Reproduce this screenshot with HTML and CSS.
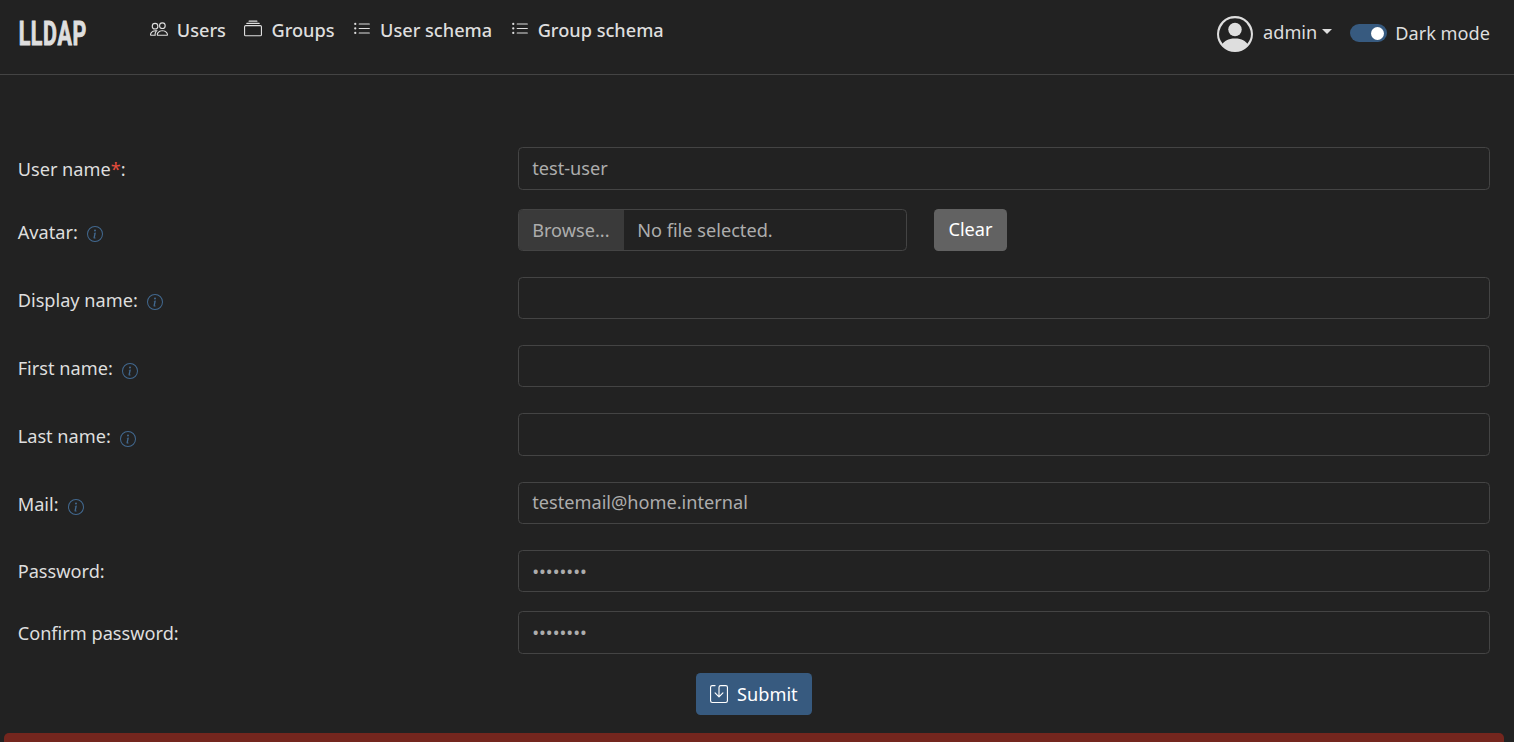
FILE: index.html
```html
<!DOCTYPE html>
<html lang="en">
<head>
<meta charset="utf-8">
<title>LLDAP</title>
<link rel="stylesheet" href="styles.css">
</head>
<body>
<svg class="defs" aria-hidden="true">
  <symbol id="people" viewBox="0 0 16 16"><path d="M15 14s1 0 1-1-1-4-5-4-5 3-5 4 1 1 1 1h8Zm-7.978-1A.261.261 0 0 1 7 12.996c.001-.264.167-1.03.76-1.72C8.312 10.629 9.282 10 11 10c1.717 0 2.687.63 3.24 1.276.593.69.758 1.457.76 1.72l-.008.002a.274.274 0 0 1-.014.002H7.022ZM11 7a2 2 0 1 0 0-4 2 2 0 0 0 0 4Zm3-2a3 3 0 1 1-6 0 3 3 0 0 1 6 0ZM6.936 9.28a5.88 5.88 0 0 0-1.23-.247A7.35 7.35 0 0 0 5 9c-4 0-5 3-5 4 0 .667.333 1 1 1h4.216A2.238 2.238 0 0 1 5 13c0-1.01.377-2.042 1.09-2.904.243-.294.526-.569.846-.816ZM4.92 10A5.493 5.493 0 0 0 4 13H1c0-.26.164-1.03.76-1.724.545-.636 1.492-1.256 3.16-1.275ZM1.5 5.5a3 3 0 1 1 6 0 3 3 0 0 1-6 0Zm3-2a2 2 0 1 0 0 4 2 2 0 0 0 0-4Z"/></symbol>
  <symbol id="collection" viewBox="0 0 16 16"><path d="M2.5 3.5a.5.5 0 0 1 0-1h11a.5.5 0 0 1 0 1h-11zm2-2a.5.5 0 0 1 0-1h7a.5.5 0 0 1 0 1h-7zM0 13a1.5 1.5 0 0 0 1.5 1.5h13A1.5 1.5 0 0 0 16 13V6a1.5 1.5 0 0 0-1.5-1.5h-13A1.5 1.5 0 0 0 0 6v7zm1.5.5A.5.5 0 0 1 1 13V6a.5.5 0 0 1 .5-.5h13a.5.5 0 0 1 .5.5v7a.5.5 0 0 1-.5.5h-13z"/></symbol>
  <symbol id="list" viewBox="0 0 16 16"><path d="M5 11.5a.5.5 0 0 1 .5-.5h9a.5.5 0 0 1 0 1h-9a.5.5 0 0 1-.5-.5zm0-4a.5.5 0 0 1 .5-.5h9a.5.5 0 0 1 0 1h-9a.5.5 0 0 1-.5-.5zm0-4a.5.5 0 0 1 .5-.5h9a.5.5 0 0 1 0 1h-9a.5.5 0 0 1-.5-.5zm-3 1a1 1 0 1 0 0-2 1 1 0 0 0 0 2zm0 4a1 1 0 1 0 0-2 1 1 0 0 0 0 2zm0 4a1 1 0 1 0 0-2 1 1 0 0 0 0 2z"/></symbol>
  <symbol id="person" viewBox="0 0 16 16"><path d="M11 6a3 3 0 1 1-6 0 3 3 0 0 1 6 0z"/><path fill-rule="evenodd" d="M0 8a8 8 0 1 1 16 0A8 8 0 0 1 0 8zm8-7a7 7 0 0 0-5.468 11.37C3.242 11.226 4.805 10 8 10s4.757 1.225 5.468 2.37A7 7 0 0 0 8 1z"/></symbol>
  <symbol id="info" viewBox="0 0 16 16"><path d="M8 15A7 7 0 1 1 8 1a7 7 0 0 1 0 14zm0 1A8 8 0 1 0 8 0a8 8 0 0 0 0 16z"/><path d="m8.930 6.588-2.290.287-.082.380.450.083c.294.070.352.176.288.469l-.738 3.468c-.194.897.105 1.319.808 1.319.545 0 1.178-.252 1.465-.598l.088-.416c-.200.176-.492.246-.686.246-.275 0-.375-.193-.304-.533L8.930 6.588zM9 4.500a1 1 0 1 1-2 0 1 1 0 0 1 2 0z"/></symbol>
  <symbol id="save" viewBox="0 0 16 16"><path d="M2 1a1 1 0 0 0-1 1v12a1 1 0 0 0 1 1h12a1 1 0 0 0 1-1V2a1 1 0 0 0-1-1H9.5a1 1 0 0 0-1 1v7.293l2.646-2.647a.5.5 0 0 1 .708.708l-3.5 3.5a.5.5 0 0 1-.708 0l-3.5-3.5a.5.5 0 1 1 .708-.708L7.5 9.293V2a2 2 0 0 1 2-2H14a2 2 0 0 1 2 2v12a2 2 0 0 1-2 2H2a2 2 0 0 1-2-2V2a2 2 0 0 1 2-2h2.5a.5.5 0 0 1 0 1H2z"/></symbol>
</svg>
<header class="header">
  <a class="brand"><span class="brand-text">LLDAP</span></a>
  <nav class="nav">
    <a class="nav-link"><svg class="icon"><use href="#people"/></svg>Users</a>
    <a class="nav-link"><svg class="icon"><use href="#collection"/></svg>Groups</a>
    <a class="nav-link"><svg class="icon"><use href="#list"/></svg>User schema</a>
    <a class="nav-link"><svg class="icon"><use href="#list"/></svg>Group schema</a>
  </nav>
  <div class="account">
    <svg class="avatar"><use href="#person"/></svg>
    <span class="account-name">admin</span>
    <span class="caret"></span>
    <span class="switch"><span class="knob"></span></span>
    <span class="mode">Dark mode</span>
  </div>
</header>
<form class="form">
  <div class="row">
    <label class="label">User name<span class="required">*</span>:</label>
    <input class="control" type="text" value="test-user">
  </div>
  <div class="row row-wide">
    <label class="label label-info">Avatar:<svg class="info"><use href="#info"/></svg></label>
    <div class="file-group">
      <div class="file"><span class="browse">Browse...</span><span class="file-name">No file selected.</span></div>
      <button class="btn btn-clear" type="button">Clear</button>
    </div>
  </div>
  <div class="row row-wide">
    <label class="label label-info">Display name:<svg class="info"><use href="#info"/></svg></label>
    <input class="control" type="text">
  </div>
  <div class="row row-wide">
    <label class="label label-info">First name:<svg class="info"><use href="#info"/></svg></label>
    <input class="control" type="text">
  </div>
  <div class="row row-wide">
    <label class="label label-info">Last name:<svg class="info"><use href="#info"/></svg></label>
    <input class="control" type="text">
  </div>
  <div class="row row-wide">
    <label class="label label-info">Mail:<svg class="info"><use href="#info"/></svg></label>
    <input class="control" type="text" value="testemail@home.internal">
  </div>
  <div class="row">
    <label class="label">Password:</label>
    <input class="control control-password" type="password" value="password">
  </div>
  <div class="row">
    <label class="label">Confirm password:</label>
    <input class="control control-password" type="password" value="password">
  </div>
  <div class="actions">
    <button class="btn btn-submit" type="button"><svg class="save"><use href="#save"/></svg>Submit</button>
  </div>
</form>
<div class="alert"></div>
</body>
</html>
```
FILE: styles.css
```css
* { box-sizing: border-box; }
body {
  margin: 0;
  background: #222;
  color: #dedede;
  font: 18.17px/27px "Noto Sans", sans-serif;
}
svg { fill: currentColor; flex: none; }
.defs { display: none; }

.header {
  display: flex;
  align-items: flex-start;
  height: 75px;
  padding: 0 24px 0 18px;
  border-bottom: 1px solid #444;
}
.brand { width: 131px; padding-top: 12px; }
.brand-text {
  display: block;
  width: max-content;
  padding-left: 1px;
  font: 700 34px/42px Roboto, sans-serif;
  letter-spacing: 1px;
  transform: scaleX(.63);
  transform-origin: 0 0;
  -webkit-text-stroke: 1px currentColor;
}
.nav { display: flex; gap: 17.7px; padding-top: 17px; }
.nav-link { display: flex; font-weight: 500; }
.icon { width: 18px; height: 18px; margin: 3px 9px 0 .8px; }
.account { display: flex; margin-left: auto; padding-top: 16px; }
.avatar { width: 36px; height: 36px; margin-right: 10px; }
.account-name { padding-top: 3px; }
.caret {
  height: 0;
  margin: 13px 18px 0 5px;
  border: 5px solid transparent;
  border-top-color: currentColor;
  border-bottom: 0;
}
.switch {
  display: flex;
  justify-content: flex-end;
  align-items: center;
  width: 37px;
  height: 18px;
  margin: 8px 8px 0 0;
  padding-right: 3px;
  border-radius: 9px;
  background: #375a7f;
}
.knob { width: 13px; height: 13px; border-radius: 50%; background: #fff; }
.mode { padding-top: 4px; }

.form { padding: 72.3px 24px 0 17.7px; }
.row {
  display: grid;
  grid-template-columns: 500px 1fr;
  height: 42.3px;
  margin-bottom: 19.2px;
}
.row-wide { margin-bottom: 25.9px; }
.label { display: flex; padding-top: 8.5px; }
.label-info { padding-top: 9.8px; }
.required { color: #e74c3c; }
.info { width: 16px; height: 16px; margin: 7.6px 0 0 9.5px; color: #426990; }
.control, .file {
  height: 42.3px;
  border: 1px solid #444;
  border-radius: 4.5px;
  background: #222;
  color: #adadad;
}
.control { width: 100%; padding: 0 13.5px .6px; font: inherit; outline: 0; }
.control-password { padding-bottom: 0; }
.file-group { display: flex; gap: 27px; }
.file { display: flex; width: 389.3px; line-height: 40px; overflow: hidden; }
.browse { width: 105px; padding-left: 13.5px; background: #3a3a3a; }
.file-name { padding-left: 13.5px; }
.btn {
  display: flex;
  align-items: center;
  justify-content: center;
  height: 42px;
  padding: 1px 0 0;
  border: 0;
  border-radius: 4.5px;
  color: #fff;
  font: inherit;
}
.btn-clear { width: 73px; padding-top: 0; background: #626262; }
.actions { display: flex; justify-content: center; }
.btn-submit { width: 116px; background: #375a7f; }
.save { width: 18px; height: 18px; margin-right: 9px; }
.alert {
  height: 9px;
  margin: 18px 10px 0 4px;
  border-radius: 5px 5px 0 0;
  background: #74261e;
}
```
